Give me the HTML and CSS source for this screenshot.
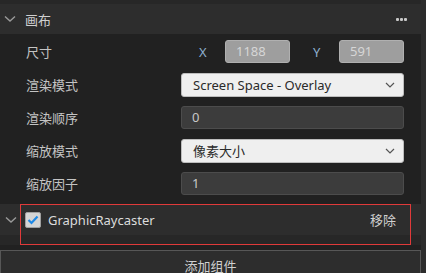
FILE: index.html
```html
<!DOCTYPE html>
<html lang="zh">
<head>
  <meta charset="UTF-8">
  <title>Inspector</title>
  <link rel="stylesheet" href="styles.css">
</head>
<body>
  <div class="inspector">
    <div class="panel">
      <div class="topbar"></div>

      <div class="section-header">
        <svg class="chevron" width="12" height="8" viewBox="0 0 12 8"><path d="M1 1.5 L6 6 L11 1.5" fill="none" stroke="#9a9a9a" stroke-width="1.4"/></svg>
        <span class="title">画布</span>
        <svg class="more" width="11" height="3" viewBox="0 0 11 3"><rect x="0" y="0" width="3" height="3" rx="1" fill="#c8c8c8"/><rect x="4" y="0" width="3" height="3" rx="1" fill="#c8c8c8"/><rect x="8" y="0" width="3" height="3" rx="1" fill="#c8c8c8"/></svg>
      </div>

      <div class="props">
        <div class="row">
          <div class="label">尺寸</div>
          <div class="field size-field">
            <span class="axis">X</span>
            <div class="input disabled">1188</div>
            <span class="axis">Y</span>
            <div class="input disabled">591</div>
          </div>
        </div>
        <div class="row">
          <div class="label">渲染模式</div>
          <div class="field">
            <div class="select">Screen Space - Overlay
              <svg class="caret" width="10" height="6" viewBox="0 0 10 6"><path d="M1 1 L5 5 L9 1" fill="none" stroke="#555" stroke-width="1.2"/></svg>
            </div>
          </div>
        </div>
        <div class="row">
          <div class="label">渲染顺序</div>
          <div class="field"><div class="input">0</div></div>
        </div>
        <div class="row">
          <div class="label">缩放模式</div>
          <div class="field">
            <div class="select">像素大小
              <svg class="caret" width="10" height="6" viewBox="0 0 10 6"><path d="M1 1 L5 5 L9 1" fill="none" stroke="#555" stroke-width="1.2"/></svg>
            </div>
          </div>
        </div>
        <div class="row">
          <div class="label">缩放因子</div>
          <div class="field"><div class="input">1</div></div>
        </div>
      </div>

      <div class="component">
        <div class="component-header">
          <svg class="chevron" width="12" height="8" viewBox="0 0 12 8"><path d="M1 1.5 L6 6 L11 1.5" fill="none" stroke="#9a9a9a" stroke-width="1.4"/></svg>
          <span class="checkbox">
            <svg width="12" height="10" viewBox="0 0 12 10"><path d="M1.5 5 L4.5 8 L10.5 1.5" fill="none" stroke="#1e88e5" stroke-width="2.2"/></svg>
          </span>
          <span class="comp-name">GraphicRaycaster</span>
          <span class="remove">移除</span>
        </div>
        <div class="component-body"></div>
        <div class="highlight"></div>
      </div>

      <div class="add-btn">添加组件</div>
    </div>
    <div class="scrollbar"></div>
  </div>
</body>
</html>
```

FILE: styles.css
```css
body {
  margin: 0;
  background: #212121;
  font-family: "Noto Sans", "Noto Sans CJK SC", sans-serif;
  font-size: 13px;
  color: #c8c8c8;
  overflow: hidden;
}

.inspector {
  display: flex;
  height: 273px;
  overflow: hidden;
}

.panel {
  width: 421px;
  flex-shrink: 0;
}

.scrollbar {
  width: 5px;
  background: #2c2c2c;
}

.topbar {
  height: 4px;
  background: #272727;
}

.section-header {
  height: 30px;
  background: #2d2d2d;
  display: flex;
  align-items: center;
  padding-left: 4px;
  padding-right: 14px;
}

.chevron {
  margin-right: 9px;
}

.title {
  color: #d0d0d0;
  flex-grow: 1;
}

.more {
  margin-top: 1px;
}

.props {
  padding-top: 1px;
}

.row {
  height: 33px;
  display: flex;
  align-items: center;
  padding-left: 26px;
}

.label {
  width: 155px;
  color: #c4c4c4;
}

.field {
  width: 223px;
  display: flex;
  align-items: center;
}

.size-field {
  justify-content: flex-end;
}

.axis {
  color: #8fb0cf;
  width: 20px;
  margin-right: 6px;
}

.axis + .input + .axis {
  margin-left: 23px;
}

.input {
  flex-grow: 1;
  height: 21px;
  line-height: 21px;
  background: #3c3c3c;
  border: 1px solid #4c4c4c;
  border-radius: 3px;
  padding-left: 10px;
  color: #c8c8c8;
}

.input.disabled {
  flex-grow: 0;
  width: 53px;
  background: #9e9e9e;
  border-color: #b0b0b0;
  color: #d6d6d6;
}

.select {
  flex-grow: 1;
  height: 22px;
  line-height: 22px;
  background: #efefef;
  border: 1px solid #bdbdbd;
  border-radius: 3px;
  padding-left: 11px;
  padding-right: 8px;
  color: #2a2a2a;
  display: flex;
  align-items: center;
  justify-content: space-between;
}

.component {
  position: relative;
  margin-top: 4px;
}

.component-header {
  height: 31px;
  background: #2d2d2d;
  display: flex;
  align-items: center;
  padding-left: 5px;
  padding-right: 25px;
}

.component-header .chevron {
  margin-right: 8px;
}

.checkbox {
  width: 14px;
  height: 14px;
  background: #d4d4d4;
  border: 1px solid #a0a0a0;
  border-radius: 2px;
  display: flex;
  align-items: center;
  justify-content: center;
  margin-right: 7px;
}

.comp-name {
  color: #dcdcdc;
  flex-grow: 1;
}

.remove {
  color: #d0d0d0;
}

.component-body {
  height: 10px;
  background: #272727;
}

.highlight {
  position: absolute;
  left: 20px;
  top: 0;
  width: 389px;
  height: 39px;
  border: 1px solid #e03a3a;
}

.add-btn {
  margin-top: 5px;
  height: 30px;
  line-height: 30px;
  background: #2d2d2d;
  border: 1px solid #575757;
  text-align: center;
  color: #d0d0d0;
}
```
